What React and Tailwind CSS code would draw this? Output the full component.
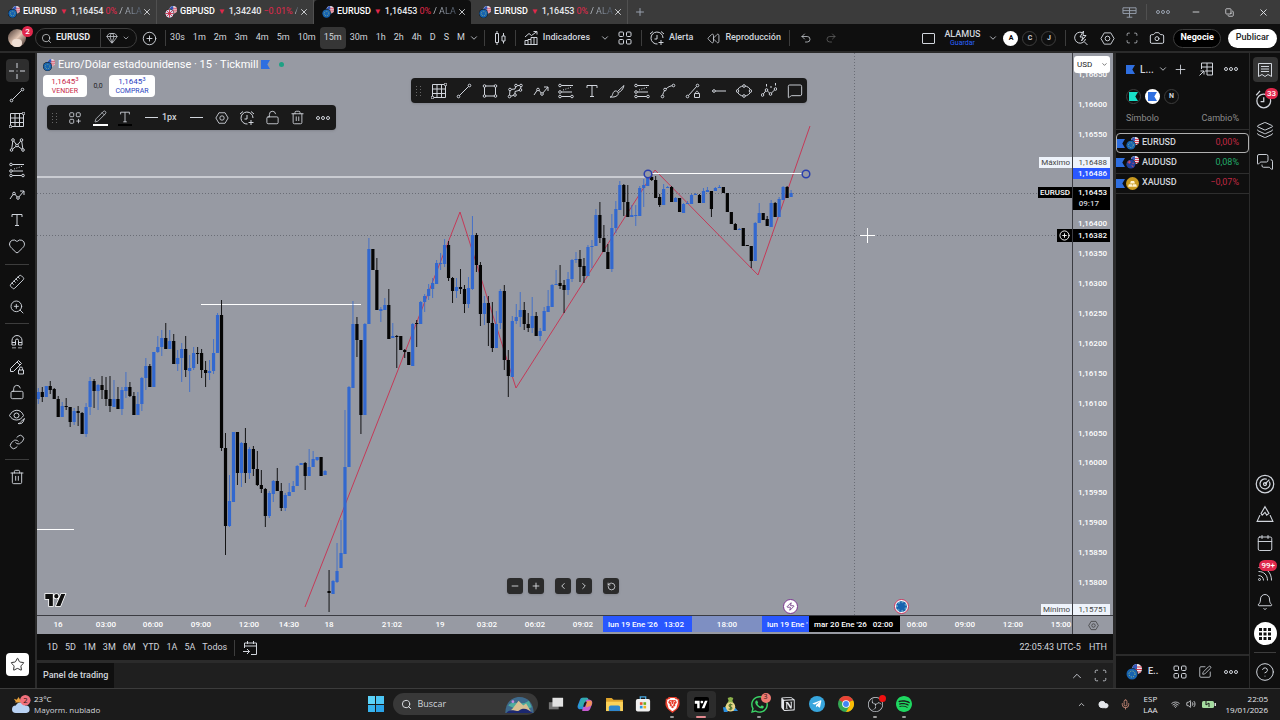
import React, { useState } from 'react';
import {
  Search, ChevronDown, ChevronUp, ChevronLeft, ChevronRight, Plus, Minus, X, Heart, Ruler, ZoomIn, LockOpen,
  Link, Trash2, Pencil, Undo2, Redo2, Rewind, Camera, Layers, Bell, Calendar, CircleHelp, MessageSquare,
  MessagesSquare, Star, RotateCcw, SquarePen, Mic, Wifi, Volume2, Cloud, Copy, CirclePlus, Gem, Zap,
} from 'lucide-react';
import { SiBrave, SiWhatsapp, SiNotion, SiSpotify, SiObsstudio } from 'react-icons/si';
import { FaTelegramPlane } from 'react-icons/fa';

const TABS = [
  { id: 1, symbol: 'EURUSD', price: '1,16454', change: '0%', rest: '/ ALA' },
  { id: 2, symbol: 'GBPUSD', price: '1,34240', change: '−0.01%', rest: '/' },
  { id: 3, symbol: 'EURUSD', price: '1,16453', change: '0%', rest: '/ ALA' },
  { id: 4, symbol: 'EURUSD', price: '1,16453', change: '0%', rest: '/ ALA' },
];

const INTERVALS = ['30s', '1m', '2m', '3m', '4m', '5m', '10m', '15m', '30m', '1h', '2h', '4h', 'D', 'S', 'M'];
const RANGES = ['1D', '5D', '1M', '3M', '6M', 'YTD', '1A', '5A', 'Todos'];

const PRICES = [
  '1,16650', '1,16600', '1,16550', '1,16500', '1,16450', '1,16400', '1,16350', '1,16300', '1,16250',
  '1,16200', '1,16150', '1,16100', '1,16050', '1,16000', '1,15950', '1,15900', '1,15850', '1,15800',
];

// x of every label on the time axis
const TICKS = [
  [21, '16'], [69, '03:00'], [116, '06:00'], [164, '09:00'], [212, '12:00'], [252, '14:30'], [292, '18'],
  [355, '21:02'], [403, '19'], [450, '03:02'], [498, '06:02'], [546, '09:02'], [690, '18:00'], [880, '06:00'],
  [928, '09:00'], [976, '12:00'], [1024, '15:00'],
];

const WATCHLIST = [
  { symbol: 'EURUSD', change: '0,00%', color: 'text-[#c02842]', coin: 'eu' },
  { symbol: 'AUDUSD', change: '0,08%', color: 'text-[#22ab6b]', coin: 'au' },
  { symbol: 'XAUUSD', change: '−0,07%', color: 'text-[#c02842]', coin: 'gold' },
];

const CHART_W = 1035;
const CHART_H = 562;

// [high, body top, body bottom, low, 1 = up]
const CANDLES = [
  [335, 339, 346, 351, 1], [334, 339, 344, 349, 0], [333, 333, 344, 344, 1], [328, 333, 337, 341, 0],
  [335, 336, 346, 346, 0], [343, 346, 364, 364, 0], [349, 353, 364, 364, 1], [345, 353, 354, 357, 0],
  [354, 354, 369, 374, 0], [355, 358, 369, 372, 1], [353, 358, 360, 373, 0], [359, 360, 381, 381, 0],
  [350, 354, 381, 384, 1], [324, 328, 354, 362, 1], [326, 328, 338, 355, 0], [331, 332, 338, 357, 1],
  [323, 332, 337, 346, 0], [324, 337, 346, 353, 0], [323, 346, 353, 359, 0], [327, 346, 354, 354, 1],
  [334, 346, 356, 356, 0], [334, 337, 356, 362, 1], [319, 334, 338, 345, 1], [329, 334, 343, 344, 0],
  [339, 343, 362, 362, 0], [339, 351, 362, 362, 1], [324, 325, 351, 358, 1], [305, 313, 325, 337, 1],
  [311, 313, 334, 334, 0], [299, 299, 334, 334, 1], [283, 294, 299, 300, 1], [277, 285, 294, 303, 1],
  [270, 285, 296, 296, 0], [277, 288, 296, 296, 1], [281, 288, 311, 311, 0], [297, 305, 311, 318, 1],
  [290, 296, 305, 329, 1], [283, 296, 317, 324, 0], [302, 315, 318, 339, 1], [294, 300, 315, 317, 1],
  [294, 300, 301, 311, 0], [296, 300, 317, 325, 0], [308, 317, 320, 334, 0], [307, 318, 320, 327, 1],
  [286, 300, 318, 321, 1], [260, 262, 300, 300, 1], [247, 262, 395, 398, 0], [380, 395, 473, 502, 0],
  [422, 448, 473, 474, 1], [379, 379, 449, 449, 1], [379, 379, 420, 432, 0], [389, 390, 420, 434, 1],
  [375, 390, 420, 430, 0], [394, 396, 420, 426, 1], [393, 396, 416, 423, 0], [398, 416, 432, 433, 0],
  [417, 432, 436, 440, 0], [435, 436, 463, 474, 0], [438, 440, 463, 465, 1], [427, 428, 441, 449, 1],
  [415, 428, 438, 438, 0], [430, 438, 455, 458, 0], [440, 442, 455, 458, 1], [430, 439, 443, 443, 1],
  [428, 433, 439, 439, 1], [412, 413, 433, 433, 1], [410, 410, 412, 412, 1], [409, 410, 423, 437, 0],
  [396, 414, 423, 423, 1], [398, 406, 414, 414, 1], [404, 404, 407, 408, 1], [404, 404, 423, 423, 0],
  [417, 418, 422, 422, 1], [517, 538, 540, 559, 0], [527, 528, 541, 541, 1], [490, 518, 529, 530, 1],
  [467, 500, 515, 515, 1], [357, 414, 501, 501, 1], [333, 334, 414, 414, 1], [248, 271, 335, 335, 1],
  [264, 271, 287, 304, 0], [287, 287, 362, 381, 0], [270, 271, 362, 362, 1], [185, 196, 271, 271, 1],
  [196, 196, 217, 217, 0], [205, 217, 257, 257, 0], [254, 256, 258, 269, 1], [245, 252, 257, 257, 1],
  [236, 252, 286, 286, 0], [270, 283, 285, 285, 1], [282, 283, 284, 315, 0], [283, 283, 297, 297, 0],
  [296, 297, 299, 305, 0], [299, 299, 312, 312, 0], [270, 271, 313, 313, 1], [267, 270, 271, 294, 0],
  [248, 249, 271, 271, 1], [241, 243, 249, 259, 1], [231, 236, 243, 247, 1], [225, 230, 236, 245, 1],
  [207, 210, 231, 231, 1], [200, 210, 211, 217, 1], [186, 192, 211, 214, 1], [188, 192, 225, 228, 0],
  [224, 225, 238, 250, 0], [225, 234, 238, 245, 1], [216, 234, 236, 241, 0], [232, 236, 251, 260, 0],
  [224, 235, 251, 255, 1], [163, 182, 236, 237, 1], [180, 182, 212, 219, 0], [209, 212, 261, 273, 0],
  [243, 250, 261, 272, 1], [243, 250, 270, 293, 0], [249, 270, 295, 299, 0], [258, 271, 295, 295, 1],
  [236, 238, 270, 276, 1], [232, 238, 307, 317, 0], [297, 307, 323, 344, 0], [263, 268, 324, 324, 1],
  [251, 264, 268, 271, 1], [239, 257, 264, 274, 1], [249, 257, 271, 277, 0], [260, 271, 275, 279, 0],
  [244, 263, 275, 280, 1], [259, 263, 283, 283, 0], [275, 278, 283, 288, 1], [254, 258, 278, 278, 1],
  [237, 253, 259, 259, 1], [231, 232, 254, 254, 1], [217, 231, 232, 232, 1], [212, 230, 233, 236, 0],
  [227, 232, 237, 260, 0], [219, 226, 237, 242, 1], [206, 207, 226, 229, 1], [199, 206, 207, 210, 1],
  [197, 206, 214, 229, 0], [205, 213, 223, 230, 0], [192, 194, 223, 223, 1], [187, 193, 194, 215, 1],
  [156, 162, 193, 193, 1], [149, 162, 185, 190, 0], [172, 185, 199, 199, 0], [191, 199, 216, 216, 0],
  [161, 175, 216, 219, 1], [148, 156, 175, 180, 1], [128, 132, 157, 157, 1], [131, 132, 149, 163, 0],
  [132, 149, 164, 164, 0], [152, 162, 164, 164, 1], [152, 162, 163, 173, 1], [133, 135, 163, 163, 1],
  [126, 132, 135, 154, 1], [122, 124, 133, 133, 1], [120, 124, 127, 128, 0], [123, 127, 145, 145, 0],
  [141, 144, 152, 154, 0], [131, 136, 152, 152, 1], [133, 134, 135, 135, 1], [133, 134, 149, 149, 0],
  [144, 145, 149, 149, 1], [145, 145, 159, 159, 0], [150, 151, 160, 160, 1], [148, 150, 151, 151, 1],
  [141, 142, 151, 151, 1], [140, 141, 142, 142, 1], [141, 142, 150, 150, 0], [135, 138, 150, 150, 1],
  [134, 137, 139, 139, 1], [138, 138, 156, 164, 0], [134, 135, 138, 138, 1], [132, 134, 135, 135, 1],
  [134, 134, 140, 140, 0], [140, 140, 159, 159, 0], [159, 159, 171, 171, 0], [170, 171, 177, 177, 0],
  [175, 176, 177, 177, 1], [175, 175, 193, 193, 0], [192, 192, 193, 193, 0], [193, 193, 208, 215, 0],
  [169, 170, 208, 208, 1], [150, 160, 170, 170, 1], [160, 160, 167, 167, 0], [163, 166, 173, 173, 0],
  [147, 150, 174, 174, 1], [149, 150, 164, 164, 0], [144, 146, 164, 164, 1], [133, 134, 147, 147, 1],
  [133, 134, 145, 145, 0], [137, 140, 144, 144, 1],
];

// Line icons, drawn on a 16px grid
function Icon({ children, className = 'size-4' }) {
  return (
    <svg viewBox="0 0 16 16" className={`shrink-0 ${className}`} fill="none" stroke="currentColor" strokeWidth="1" aria-hidden="true">
      {children}
    </svg>
  );
}

const Node = ({ x, y }) => <circle cx={x} cy={y} r="1.3" fill="#0f0f0f" />;

const CrossIcon = () => <Icon><path d="M8 0v5M8 11v5M0 8h5M11 8h5M7.5 8h1" /></Icon>;
const TrendIcon = () => (
  <Icon><path d="M3 13 13 3" /><Node x={13.5} y={2.5} /><Node x={2.5} y={13.5} /></Icon>
);
const GannIcon = () => (
  <Icon>
    <path d="M1.5 1.5h13v13h-13zM1.5 6h13M1.5 10.5h13M6 1.5v13M10.5 1.5v13" />
    <Node x={14.5} y={1.5} /><Node x={1.5} y={14.5} />
  </Icon>
);
const PatternIcon = () => (
  <Icon>
    <path d="M2.5 13 4 3l4 5.5L12.5 3 14 13 8 8.5z" />
    <Node x={2.5} y={13} /><Node x={4} y={3} /><Node x={8} y={8.5} /><Node x={12.5} y={3} /><Node x={14} y={13} />
  </Icon>
);
const FibIcon = () => (
  <Icon>
    <path d="M3 2.5h12M2 9h12M3 13.5h11" /><path d="m5 7 9-3" strokeDasharray="1 1.5" />
    <Node x={2} y={2.5} /><Node x={2} y={9} /><Node x={2} y={13.5} /><Node x={14} y={13.5} />
  </Icon>
);
const PathIcon = () => (
  <Icon>
    <path d="M1 12 5 6l4 5 6-7M11 4h4v4" /><Node x={5} y={6.5} /><Node x={9} y={11} />
  </Icon>
);
const TextIcon = ({ className }) => <Icon className={className}><path d="M3 5V2.5h10V5M8 2.5v11M6 13.5h4" /></Icon>;
const MagnetIcon = () => (
  <Icon>
    <path d="M3 11V6.5a5 5 0 0 1 10 0V11H9.5V6.5a1.5 1.5 0 0 0-3 0V11zM3 8.5h3.5M9.5 8.5H13M4 13v1.5M6 13v1.5M10 13v1.5M12 13v1.5" />
  </Icon>
);
const PencilLockIcon = () => (
  <Icon>
    <path d="m1.5 9.5 8-8 3 3-8 8h-3zM8 3l3 3" /><path d="M9.5 11h5v4h-5zM10.5 11V9.5a1.5 1.5 0 0 1 3 0V11" />
  </Icon>
);
const EyeBrushIcon = () => (
  <Icon>
    <path d="M.5 6.5C4-.5 12-.5 14.5 6.5 13 9 11 11 7.5 11S2 9 .5 6.5z" /><circle cx="7.5" cy="6.5" r="2.5" />
    <path d="M9 14.5c2 .5 2.5-2 3.5-2.5l3-2.5-1.5 3.5c-1 1.5-3 2-5 1.5z" fill="#0f0f0f" />
  </Icon>
);
const RectIcon = () => (
  <Icon>
    <path d="M2.5 3h11v10h-11z" /><Node x={2.5} y={3} /><Node x={13.5} y={3} /><Node x={2.5} y={13} /><Node x={13.5} y={13} />
  </Icon>
);
const PolyIcon = () => (
  <Icon>
    <path d="M2.5 13.5 3 6.500l5-.5 1-3.500h5L13.500 7 8 8.500V12z" />
    <Node x={2.5} y={13.5} /><Node x={3} y={6.5} /><Node x={9} y={2.5} /><Node x={14} y={2.5} /><Node x={13.5} y={7} /><Node x={8} y={12} />
  </Icon>
);
const BrushIcon = () => (
  <Icon><path d="M1 14c3 .5 2-5 5-6 2-.5 4 1.5 3 3.5-1 2-4 3-8 2.5zM8.500 8.500 15 2.500c-1 4-3 6-5.500 7" /></Icon>
);
const CurveIcon = () => (
  <Icon>
    <path d="M2.5 13.5C3 8 7 3 13.5 2.5" /><Node x={2.5} y={13.5} /><Node x={5} y={6.5} /><Node x={13.5} y={2.5} />
  </Icon>
);
const TrendLockIcon = () => (
  <Icon>
    <path d="M3 13 12 3M9.5 10.5h5v4h-5zM10.5 10.5c0-3 3-3 3 0" /><Node x={12.5} y={2.5} /><Node x={2.5} y={13.5} />
  </Icon>
);
const HLineIcon = () => <Icon><path d="M1 8h14" /><Node x={3} y={8} /></Icon>;
const EllipseIcon = () => (
  <Icon>
    <ellipse cx="8" cy="8" rx="6.5" ry="5" /><Node x={1.5} y={8} /><Node x={14.5} y={8} /><Node x={8} y={3} /><Node x={8} y={13} />
  </Icon>
);
const WaveIcon = () => (
  <Icon>
    <path d="m1.5 12 4-5 4 4 5-5M5.5 1v2.5M10 3v2M14.5 0v2.5" />
    <Node x={1.5} y={12} /><Node x={5.5} y={7} /><Node x={9.5} y={11} /><Node x={14.5} y={6} />
  </Icon>
);
const DotsIcon = () => (
  <Icon><circle cx="3" cy="8" r="1.5" /><circle cx="8" cy="8" r="1.5" /><circle cx="13" cy="8" r="1.5" /></Icon>
);
const BlocksIcon = () => (
  <Icon>
    <rect x="2" y="2" width="4.5" height="4.5" rx="1" /><rect x="9.5" y="2" width="4.5" height="4.5" rx="1" />
    <rect x="2" y="9.5" width="4.5" height="4.5" rx="1" /><rect x="9.5" y="9.5" width="4.5" height="4.5" rx="1" />
  </Icon>
);
const BlocksPlusIcon = () => (
  <Icon className="size-[14px]">
    <rect x="2" y="2" width="4.5" height="4.5" rx="1" /><rect x="9.5" y="2" width="4.5" height="4.5" rx="1" />
    <rect x="2" y="9.5" width="4.5" height="4.5" rx="1" /><path d="M12 9v5M9.5 11.5h5" />
  </Icon>
);
const AlarmPlusIcon = () => (
  <Icon>
    <path d="M14 8A6 6 0 1 0 8.5 14M1 4l3-2.5M15 4l-3-2.5M8 5v4H5.5M12 10v5M9.5 12.5h5" />
  </Icon>
);
const AlarmIcon = () => (
  <Icon className="size-5"><circle cx="7" cy="9.5" r="5.5" /><path d="M1 5l3-3.5M7 6.5V10H4.5" /></Icon>
);
const CandlesIcon = () => (
  <Icon><path d="M3.5 3.5h3v9h-3zM5 1v2.5M5 12.5V15M10 6h3v5h-3zM11.5 3v3M11.5 11v2.5" /></Icon>
);
const IndicatorsIcon = () => (
  <Icon><path d="M2 14.5v-4h3v4M5 10.5v-1h3v5M8 9.5v-2h3v7M11 7.5h3v7M1.5 14.5h13M2 7l4-3.5 2.5 2L14 1.5M10.5 1.5H14v3" /></Icon>
);
const HexIcon = ({ className }) => (
  <Icon className={className}><path d="M4.5 2h7L15 8l-3.5 6h-7L1 8z" /><circle cx="8" cy="8" r="2.5" /></Icon>
);
const QuickSearchIcon = () => (
  <Icon><path d="M9 2.5A5.5 5.5 0 1 0 12.5 9M11 11.5l3.5 3.5M10.5 1 7 7h3l-1.500 4L13 5.500h-3z" /></Icon>
);
const FrameIcon = ({ className }) => (
  <Icon className={className}><path d="M1.5 5V3q0-1.5 1.5-1.5h2M11 1.5h2q1.5 0 1.5 1.5v2M14.5 11v2q0 1.5-1.5 1.5h-2M5 14.5H3Q1.5 14.5 1.5 13v-2" /></Icon>
);
const TableIcon = () => (
  <Icon><path d="M3.5 8V2h11v12H9M3.5 6h11M9 2v12M14 10H7M1.5 14.5 6 10M2.5 10H6v3.5" /></Icon>
);
const ListIcon = () => (
  <Icon><path d="M1.5 1.5h13v13l-3.5-2-3 2-3-2-3.5 2zM4 4.5h8M4 7h8M4 9.5h8" /></Icon>
);
const TargetIcon = () => (
  <Icon className="size-5"><circle cx="8" cy="8" r="7" /><path d="M11.5 6A4 4 0 1 1 9.5 4.200M8 8l3.500-3.500" /><circle cx="8" cy="8" r="1.200" /></Icon>
);
const PyramidIcon = () => (
  <Icon className="size-[18px]"><path d="m8 1.5 3.5 6L9.5 9 8 6.5 5.5 9l-1-1.5zM3.5 9 1 14.5h14L12.5 9" /></Icon>
);
const FeedIcon = () => (
  <Icon><circle cx="2.5" cy="13.5" r="1" /><path d="M1.5 9.5c3 0 5 2 5 5M1.5 5.5c5.5 0 9 3.5 9 9M1.5 1.5c8 0 13 5 13 13" /></Icon>
);
const GoToDateIcon = () => (
  <Icon><path d="M2.5 8V3h12v11.5H9M2.5 6h12M5.5 1v3M11.5 1v3M1 11.5h6.5M5 9l2.5 2.5L5 14" /></Icon>
);
const MonitorsIcon = () => (
  <Icon className="size-[15px]"><path d="M1 3h14v6H1zM8 3v10M1 6h14M5 13h6" /></Icon>
);

function Flag({ className = 'text-[#2f6fe0]' }) {
  return (
    <svg viewBox="0 0 10 10" className={`size-[9px] shrink-0 ${className}`} fill="currentColor" aria-hidden="true">
      <path d="M0 0h10L7 5l3 5H0z" />
    </svg>
  );
}

function Coins({ kind = 'eu', className = 'size-[13px]' }) {
  if (kind === 'gold') {
    return (
      <svg viewBox="0 0 16 16" className={`shrink-0 ${className}`} aria-hidden="true">
        <circle cx="8" cy="8" r="8" fill="#c99a20" />
        <path d="M6 5h4l1 3H5zM3.5 9h4l.5 3H2.5zM8.5 9h4l1 3H8z" fill="#fff3d0" />
      </svg>
    );
  }
  return (
    <svg viewBox="0 0 16 16" className={`shrink-0 ${className}`} aria-hidden="true">
      <circle cx="11" cy="5" r="5" fill="#f1e9ee" />
      <path d="M10 3h6M10 5.5h6M9 8h6" stroke="#d43a50" strokeWidth="1.2" />
      <path d="M6.5 3A5 5 0 0 1 11 0v5H6z" fill="#3558b8" />
      <circle cx="6" cy="10" r="6" fill="#0f0f0f" />
      <circle cx="6" cy="10" r="5.5" fill={kind === 'gb' ? '#d8dcec' : kind === 'au' ? '#22409c' : '#1763b0'} />
      {kind === 'eu' && <circle cx="6" cy="10" r="3" fill="none" stroke="#a9c47c" strokeWidth="1" strokeDasharray="1 1.4" />}
      {kind === 'au' && <path d="M2 7.5h4M4 5.5v4M7 12l2 1M8 9h1.5" stroke="#e84a58" strokeWidth="1.2" />}
      {kind === 'gb' && <path d="M6 4.5v11M.5 10h11M2 6l8 8M10 6l-8 8" stroke="#cc2c48" strokeWidth="1.2" />}
    </svg>
  );
}

function TvLogo({ className, fill, stroke = 'none' }) {
  return (
    <svg viewBox="-2 -2 40 26" className={className} aria-hidden="true">
      <path d="M0 0h14v22H7V9H0zM28 22h-8L29.5 0H37zM20.5 8a4 4 0 1 1 0-8 4 4 0 0 1 0 8z" fill={fill} stroke={stroke} strokeWidth="3" paintOrder="stroke" />
    </svg>
  );
}

const Sep = () => <span className="h-4 w-px shrink-0 bg-[#3d3d3d]" />;

function WindowTabs({ active, onSelect }) {
  return (
    <header className="flex h-6 shrink-0 items-stretch bg-[#3b3b3b] text-[9px] text-gray-200">
      {TABS.map((tab) => (
        <div
          key={tab.id}
          className={`flex w-[157px] shrink-0 items-center gap-[2px] pl-2 pr-1 ${active === tab.id ? 'rounded-t bg-[#0f0f0f]' : 'border-r border-[#505050]'}`}
        >
          <button onClick={() => onSelect(tab.id)} className="flex min-w-0 flex-1 items-center gap-[2px] whitespace-nowrap">
            <Coins kind={tab.symbol === 'GBPUSD' ? 'gb' : 'eu'} className="mr-px size-3" />
            <span className="font-medium text-white">{tab.symbol}</span>
            <span className="px-px text-[8px] text-[#e0284c]">▼</span>
            <span className="font-medium">{tab.price}</span>
            <span className="text-[#e0284c]">{tab.change}</span>
            <span className="bg-linear-to-r from-gray-300 to-gray-600 bg-clip-text text-transparent">{tab.rest}</span>
          </button>
          <button aria-label="Cerrar pestaña"><X className="size-[10px]" strokeWidth={2} /></button>
        </div>
      ))}
      <button aria-label="Nueva pestaña" className="px-[6px] text-gray-400"><Plus className="size-3" strokeWidth={2} /></button>
      <div className="ml-auto flex items-center text-gray-400">
        <MonitorsIcon />
        <span className="ml-[9px] mr-2 h-4 w-px bg-[#505050]" />
        <DotsIcon />
        <button aria-label="Minimizar" className="ml-5 text-gray-200"><Minus className="size-[10px]" /></button>
        <button aria-label="Restaurar" className="ml-6 text-gray-200"><Copy className="size-[9px] -scale-x-100 rotate-90" /></button>
        <button aria-label="Cerrar" className="ml-6 mr-[11px] text-gray-200"><X className="size-[11px]" /></button>
      </div>
    </header>
  );
}

function TopBar({ interval, onInterval }) {
  return (
    <div className="flex h-[29px] shrink-0 items-center border-b-2 border-[#2b2b2b] bg-[#0f0f0f] pl-2 pr-[3px] pt-px text-[9px] font-medium text-gray-300">
      <button aria-label="Perfil" className="relative size-[18px] shrink-0 rounded-full bg-linear-to-br from-[#4a3a34] via-[#e3c6b4] to-[#3a2c28]">
        <span className="absolute bottom-0 left-1 h-2 w-[10px] rounded-full bg-[#f0dfd4]" />
        <span className="absolute -right-[7px] -top-[3px] flex size-[11px] items-center justify-center rounded-full bg-[#e0284c] text-[8px] text-white">2</span>
      </button>
      <div className="ml-[9px] flex h-5 items-center rounded-full border border-[#3d3d3d]">
        <button className="flex items-center gap-1 pl-[5px] pr-[10px] font-bold text-gray-200">
          <Search className="size-[11px]" strokeWidth={1.5} />EURUSD
        </button>
        <span className="h-[18px] w-px bg-[#3d3d3d]" />
        <button aria-label="Clase" className="flex items-center gap-1 pl-[5px] pr-[6px]">
          <Gem className="size-3" strokeWidth={1.5} /><ChevronDown className="size-2" />
        </button>
      </div>
      <button aria-label="Añadir símbolo" className="ml-[5px] mr-2"><CirclePlus className="size-[15px]" strokeWidth={1.5} /></button>
      <Sep />
      <div className="flex items-center font-normal">
        {INTERVALS.map((item) => (
          <button
            key={item}
            onClick={() => onInterval(item)}
            className={`h-[22px] rounded px-1 ${item === interval ? 'bg-[#363636]' : ''}`}
          >
            {item}
          </button>
        ))}
        <button aria-label="Más intervalos" className="mr-[5px]"><ChevronDown className="size-[10px]" /></button>
      </div>
      <Sep />
      <button aria-label="Velas" className="mx-[7px]"><CandlesIcon /></button>
      <Sep />
      <button className="ml-[7px] flex items-center gap-1"><IndicatorsIcon />Indicadores</button>
      <button aria-label="Favoritos" className="ml-[10px] mr-[7px]"><ChevronDown className="size-[10px]" /></button>
      <button aria-label="Plantillas" className="mr-2"><BlocksIcon /></button>
      <Sep />
      <button className="ml-[7px] mr-[14px] flex items-center gap-1"><AlarmPlusIcon />Alerta</button>
      <button className="mr-2 flex items-center gap-[5px]"><Rewind className="size-[13px]" strokeWidth={1.5} />Reproducción</button>
      <Sep />
      <button aria-label="Deshacer" className="ml-[10px]"><Undo2 className="size-3" strokeWidth={1.5} /></button>
      <button aria-label="Rehacer" className="ml-[13px] text-[#666]"><Redo2 className="size-3" strokeWidth={1.5} /></button>

      <div className="ml-auto flex items-center">
        <span className="h-[11px] w-[13px] rounded-[1px] border border-gray-300" />
        <button className="ml-[9px] flex flex-col items-center text-[9px] leading-[9px]">
          <span>ALAMUS</span>
          <span className="text-[7px] font-normal leading-[8px] text-[#2962ff]">Guardar</span>
        </button>
        <ChevronDown className="ml-2 mr-[5px] size-[10px]" />
        <div className="flex gap-1 text-[7px] font-bold">
          <button className="size-[15px] rounded-full bg-white text-black">A</button>
          <button className="size-[15px] rounded-full border border-[#3d3d3d]">C</button>
          <button className="size-[15px] rounded-full border border-[#3d3d3d]">J</button>
        </div>
        <span className="ml-[9px] mr-[7px] h-4 w-px bg-[#3d3d3d]" />
        <div className="flex items-center gap-[11px]">
          <button aria-label="Búsqueda rápida"><QuickSearchIcon /></button>
          <button aria-label="Ajustes"><HexIcon className="size-[15px]" /></button>
          <button aria-label="Pantalla completa"><FrameIcon className="size-3" /></button>
          <button aria-label="Captura"><Camera className="size-4" strokeWidth={1.5} /></button>
        </div>
        <button className="ml-2 h-[19px] rounded-full border border-[#3d3d3d] bg-black px-[6px] text-[9px] font-bold text-white">Negocie</button>
        <button className="ml-[7px] h-[19px] rounded-full bg-white px-2 text-[9px] font-medium text-[#222]">Publicar</button>
      </div>
    </div>
  );
}

function DrawingRail() {
  return (
    <aside className="flex w-[35px] shrink-0 flex-col items-center bg-[#0f0f0f] pb-3 pr-px pt-[6px] text-gray-300">
      <button aria-label="Cruz" className="mb-[5px] flex size-[23px] items-center justify-center rounded bg-[#2e2e2e]"><CrossIcon /></button>
      <div className="flex flex-col items-center gap-[9px]">
        <button aria-label="Línea de tendencia"><TrendIcon /></button>
        <button aria-label="Gann"><GannIcon /></button>
        <button aria-label="Patrones"><PatternIcon /></button>
        <button aria-label="Pronóstico"><FibIcon /></button>
        <button aria-label="Trayectoria"><PathIcon /></button>
        <button aria-label="Texto"><TextIcon /></button>
        <button aria-label="Favorito"><Heart className="size-[18px]" strokeWidth={1.3} /></button>
      </div>
      <span className="my-[9px] h-px w-6 bg-[#3d3d3d]" />
      <div className="flex flex-col items-center gap-[9px]">
        <button aria-label="Medir"><Ruler className="size-4 -scale-x-100" strokeWidth={1.4} /></button>
        <button aria-label="Acercar"><ZoomIn className="size-4" strokeWidth={1.4} /></button>
      </div>
      <span className="mb-[10px] mt-2 h-px w-6 bg-[#3d3d3d]" />
      <div className="flex flex-col items-center gap-[9px]">
        <button aria-label="Imán"><MagnetIcon /></button>
        <button aria-label="Bloquear dibujo"><PencilLockIcon /></button>
        <button aria-label="Bloquear todo"><LockOpen className="size-4" strokeWidth={1.4} /></button>
        <button aria-label="Ocultar"><EyeBrushIcon /></button>
        <button aria-label="Vincular"><Link className="size-4" strokeWidth={1.4} /></button>
      </div>
      <span className="my-[9px] h-px w-6 bg-[#3d3d3d]" />
      <button aria-label="Eliminar"><Trash2 className="size-4" strokeWidth={1.4} /></button>
      <button aria-label="Herramientas favoritas" className="mt-auto flex size-[23px] items-center justify-center rounded bg-white text-[#222]">
        <Star className="size-[15px]" strokeWidth={1.5} />
      </button>
    </aside>
  );
}

function Grip() {
  return (
    <svg viewBox="0 0 6 12" className="h-3 w-[6px] shrink-0 fill-[#666]" aria-hidden="true">
      <path d="M0 1h1v1H0zM4 1h1v1H4zM0 4h1v1H0zM4 4h1v1H4zM0 7h1v1H0zM4 7h1v1H4zM0 10h1v1H0zM4 10h1v1H4z" />
    </svg>
  );
}

function Candles() {
  return (
    <svg
      viewBox={`0 0 ${CHART_W} ${CHART_H}`}
      preserveAspectRatio="none"
      className="absolute inset-0 size-full"
      role="img"
      aria-label="Gráfico EURUSD 15 minutos"
    >
      <g stroke="#6a6d76" strokeDasharray="1 2" shapeRendering="crispEdges">
        <path d="M0 140.5H1035M0 182.5H1035M817.5 0V562" />
      </g>
      <path d="M0 124H611" stroke="#c9cbd1" strokeWidth="2" />
      <path d="M164 251.5H324M0 476.5H37" stroke="#fff" strokeWidth="1" />
      <path d="M268 554 423 159 479 335 618 117 721 222 773 73" fill="none" stroke="#c43a58" strokeWidth="1" />
      {CANDLES.map(([high, top, bottom, low, up], i) => {
        const x = 1.3 + i * 3.983;
        const fill = up ? '#3268cf' : '#050505';
        return (
          <g key={i} fill={fill}>
            <rect x={x - 0.5} y={high} width="1" height={Math.max(low - high, 1)} opacity={up ? 0.8 : 0.9} />
            <rect x={x - 1.6} y={top} width="3.2" height={Math.max(bottom - top, 1)} />
          </g>
        );
      })}
      <path d="M611 120.5H769" stroke="#fff" strokeWidth="1" />
      <g fill="#979aa3" stroke="#2a3fae" strokeWidth="1.5">
        <circle cx="611" cy="121" r="3.8" /><circle cx="769" cy="121" r="3.8" />
      </g>
      <path d="M830.5 175v15M823 182.5h15" stroke="#fff" strokeWidth="1" />
    </svg>
  );
}

function TradeBox() {
  return (
    <div className="absolute left-[6px] top-[5px] flex flex-col items-start">
      <div className="flex h-[13px] items-center gap-[3px] text-white">
        <Coins className="size-3" />
        <h1 className="text-[11px] font-normal leading-[13px]">Euro/Dólar estadounidense · 15 · Tickmill</h1>
        <Flag className="text-[#2f6fe0]" />
        <span className="ml-[6px] size-[5px] rounded-full bg-[#1fa184]" />
      </div>
      <div className="mt-1 flex items-center text-center text-[8px] font-normal leading-[9px]">
        <button className="flex h-[22px] w-11 flex-col items-center justify-center rounded bg-white text-[#c8294a]">
          <span className="leading-[10px]">1,1645<sup className="text-[6px]">3</sup></span><span className="text-[7px]">VENDER</span>
        </button>
        <span className="w-[22px] text-[7px] text-[#222]">0,0</span>
        <button className="flex h-[22px] w-[46px] flex-col items-center justify-center rounded bg-white text-[#2a3fc0]">
          <span className="leading-[10px]">1,1645<sup className="text-[6px]">3</sup></span><span className="text-[7px]">COMPRAR</span>
        </button>
      </div>
      <div className="ml-1 mt-2 flex h-[25px] items-center rounded bg-[#1a1a1a] px-[5px] text-[9px] text-gray-300 shadow">
        <Grip />
        <button aria-label="Plantillas" className="ml-[10px] mr-[10px]"><BlocksPlusIcon /></button>
        <button aria-label="Color de línea" className="flex w-4 flex-col items-center gap-px">
          <Pencil className="size-[13px]" strokeWidth={1.4} /><span className="h-[2px] w-[15px] bg-white" />
        </button>
        <button aria-label="Color de texto" className="ml-[10px] flex w-[14px] flex-col items-center">
          <TextIcon className="size-[14px]" /><span className="h-[2px] w-[14px] bg-black" />
        </button>
        <button className="ml-[13px] flex items-center gap-1"><span className="h-px w-[13px] bg-gray-300" />1px</button>
        <button aria-label="Estilo de línea" className="ml-[13px] mr-3"><span className="block h-px w-[13px] bg-gray-300" /></button>
        <div className="flex items-center gap-[10px]">
          <button aria-label="Ajustes"><HexIcon className="size-[14px]" /></button>
          <button aria-label="Alerta"><AlarmPlusIcon /></button>
          <button aria-label="Bloquear"><LockOpen className="size-[15px]" strokeWidth={1.4} /></button>
          <button aria-label="Eliminar"><Trash2 className="size-[15px]" strokeWidth={1.4} /></button>
          <button aria-label="Más"><DotsIcon /></button>
        </div>
      </div>
    </div>
  );
}

function FavoritesBar() {
  const tools = [
    GannIcon, TrendIcon, RectIcon, PolyIcon, PathIcon, FibIcon, TextIcon, BrushIcon, FibIcon, CurveIcon,
    TrendLockIcon, HLineIcon, EllipseIcon, WaveIcon,
  ];
  return (
    <div className="absolute left-[374px] top-[25px] flex h-[25px] w-[396px] items-center rounded bg-[#1a1a1a] pl-[5px] pr-1 text-gray-300 shadow">
      <Grip />
      <div className="ml-[9px] flex flex-1 items-center justify-between">
        {tools.map((Tool, i) => (
          <button key={i} aria-label={`Herramienta ${i + 1}`}><Tool /></button>
        ))}
        <button aria-label="Comentario"><MessageSquare className="size-4" strokeWidth={1.4} /></button>
      </div>
    </div>
  );
}

function ChartControls() {
  const btn = 'flex size-4 items-center justify-center rounded-[3px] bg-[#2b2b2b] text-gray-200 shadow';
  return (
    <div className="absolute bottom-[21px] left-[470px] flex">
      <button aria-label="Alejar" className={btn}><Minus className="size-[10px]" /></button>
      <button aria-label="Acercar" className={`ml-[5px] ${btn}`}><Plus className="size-[10px]" /></button>
      <button aria-label="Izquierda" className={`ml-[11px] ${btn}`}><ChevronLeft className="size-[10px]" /></button>
      <button aria-label="Derecha" className={`ml-[5px] ${btn}`}><ChevronRight className="size-[10px]" /></button>
      <button aria-label="Restablecer" className={`ml-[11px] ${btn}`}><RotateCcw className="size-[9px]" /></button>
    </div>
  );
}

function PriceBadge({ y, tag, tagClass, value, className }) {
  return (
    <div className="absolute right-[3px] flex items-start gap-px" style={{ top: `${(y / CHART_H) * 100}%` }}>
      {tag && <span className={`flex h-[11px] items-center px-[2px] ${tagClass}`}>{tag}</span>}
      <span className={`w-[37px] pr-[3px] text-right leading-[11px] ${className}`}>{value}</span>
    </div>
  );
}

function PriceAxis() {
  return (
    <div className="flex w-[41px] shrink-0 flex-col border-l border-[#3b3c42] bg-[#979aa3] pb-[27px] pt-4">
      <div className="flex flex-1 flex-col justify-between pr-[6px] text-right leading-[11px]">
        {PRICES.map((price) => <span key={price}>{price}</span>)}
      </div>
    </div>
  );
}

function Chart() {
  return (
    <div className="relative flex min-h-0 flex-1 overflow-hidden bg-[#979aa3] text-[8px] font-medium text-white">
      <div className="relative min-w-0 flex-1">
        <Candles />
        <TradeBox />
        <FavoritesBar />
        <ChartControls />
        <TvLogo className="absolute bottom-2 left-[6px] h-[14px] w-6" fill="#0f0f0f" stroke="#fff" />
        <span className="absolute bottom-px left-[746px] flex size-[15px] items-center justify-center rounded-full border border-[#7b3390] bg-white text-[#5a1a70]">
          <Zap className="size-[9px]" />
        </span>
        <span className="absolute bottom-px left-[857px] flex size-[15px] items-center justify-center rounded-full border border-[#c8325c] bg-white">
          <span className="size-[11px] rounded-full border-2 border-dotted border-[#5a9ac0] bg-[#1763b0]" />
        </span>
      </div>
      <PriceAxis />
      <select aria-label="Divisa" className="absolute right-[3px] top-[3px] h-[17px] w-[36px] appearance-none rounded-[3px] bg-white pl-[3px] text-[8px] font-normal text-[#222]">
        <option>USD</option>
      </select>
      <ChevronDown className="pointer-events-none absolute right-[5px] top-2 size-[7px] text-[#222]" />
      <PriceBadge y={104} tag="Máximo" tagClass="bg-[#eef3fb] font-normal text-[#444]" value="1,16488" className="bg-[#eef3fb] font-normal text-[#444]" />
      <PriceBadge y={115} value="1,16486" className="bg-[#2957ff]" />
      <PriceBadge y={134} tag="EURUSD" tagClass="bg-black" value={<>1,16453<br /><span className="pr-2 text-gray-300">09:17</span></>} className="bg-black pb-px leading-[10px]" />
      <PriceBadge y={176} tag={<CirclePlus className="size-[11px]" />} tagClass="h-[13px] bg-black px-[1px]" value="1,16382" className="bg-black py-px" />
      <PriceBadge y={551} tag="Mínimo" tagClass="bg-[#eef3fb] font-normal text-[#444]" value="1,15751" className="bg-[#eef3fb] font-normal text-[#444]" />
    </div>
  );
}

function TimeBadge({ from, to, className, children }) {
  return (
    <div
      className={`absolute top-0 h-4 whitespace-pre pl-[5px] leading-[18px] ${className}`}
      style={{ left: `${(from / CHART_W) * 100}%`, width: `${((to - from) / CHART_W) * 100}%` }}
    >
      {children}
    </div>
  );
}

function TimeAxis() {
  return (
    <div className="flex h-[19px] shrink-0 border-t border-[#3b3c42] bg-[#979aa3] text-[8px] font-medium text-white">
      <div className="relative flex min-w-0 flex-1 items-center overflow-hidden">
        <TimeBadge from={655} to={725} className="bg-[#7e8fc2]" />
        {TICKS.map(([x, label], i) => (
          <React.Fragment key={x}>
            <span style={{ flexGrow: x - (i ? TICKS[i - 1][0] : 0) }} />
            <span className="relative flex w-0 justify-center">{label}</span>
          </React.Fragment>
        ))}
        <span style={{ flexGrow: CHART_W - 1024 }} />
        <TimeBadge from={566} to={655} className="bg-[#2957ff]">{"lun 19 Ene '26   13:02"}</TimeBadge>
        <TimeBadge from={725} to={772} className="bg-[#2957ff]">{"lun 19 Ene '"}</TimeBadge>
        <TimeBadge from={772} to={863} className="bg-black">{"mar 20 Ene '26   02:00"}</TimeBadge>
      </div>
      <button aria-label="Ajustes de escala" className="flex w-[41px] items-center justify-center border-l border-[#3b3c42] text-[#333]">
        <HexIcon className="size-[11px]" />
      </button>
    </div>
  );
}

function BottomBars() {
  return (
    <>
      <div className="flex h-[26px] shrink-0 items-center bg-[#0f0f0f] px-[6px] pt-[2px] text-[9px] font-normal text-gray-300">
        <div className="flex gap-px pl-px">
          {RANGES.map((range) => <button key={range} className="px-[3px]">{range}</button>)}
        </div>
        <span className="ml-1 mr-[7px] h-4 w-px bg-[#3d3d3d]" />
        <button aria-label="Ir a fecha"><GoToDateIcon /></button>
        <span className="ml-auto">22:05:43 UTC-5</span>
        <button className="ml-2">HTH</button>
      </div>
      <div className="flex h-7 shrink-0 items-stretch border-t-3 border-[#2b2b2b] bg-[#1f1f1f] text-gray-300">
        <button className="bg-[#0f0f0f] px-[6px] pt-px text-[9px] font-medium">Panel de trading</button>
        <div className="ml-auto flex items-center gap-[10px] pr-[6px]">
          <button aria-label="Expandir"><ChevronUp className="size-[14px]" strokeWidth={1.5} /></button>
          <button aria-label="Maximizar"><FrameIcon className="size-[13px]" /></button>
        </div>
      </div>
    </>
  );
}

function Watchlist() {
  return (
    <section className="flex w-[133px] shrink-0 flex-col bg-[#0f0f0f] text-gray-300">
      <div className="flex h-8 items-center pl-[10px] pr-[10px]">
        <Flag />
        <button className="ml-[5px] flex items-center gap-1 text-[10px] font-medium">L...<ChevronDown className="size-[10px]" /></button>
        <button aria-label="Añadir" className="ml-auto"><Plus className="size-[15px]" strokeWidth={1.4} /></button>
        <button aria-label="Tabla" className="ml-[10px]"><TableIcon /></button>
        <button aria-label="Más" className="ml-[9px]"><DotsIcon /></button>
      </div>
      <div className="flex h-[23px] items-center gap-1 pl-[10px]">
        <button aria-label="Lista turquesa" className="flex size-[15px] items-center justify-center rounded-full border border-[#3d3d3d]"><Flag className="text-[#18dfc8]" /></button>
        <button aria-label="Lista azul" className="flex size-[15px] items-center justify-center rounded-full bg-white"><Flag /></button>
        <button className="size-[15px] rounded-full border border-[#3d3d3d] text-[7px] font-bold">N</button>
      </div>
      <table className="w-full border-collapse text-[9px]">
        <thead>
          <tr className="h-[21px] border-b border-[#2e2e2e] text-left text-[#8c8c8c]">
            <th className="pl-[10px] font-normal">Símbolo</th>
            <th className="pr-[10px] text-right font-normal">Cambio%</th>
          </tr>
        </thead>
        <tbody>
          <tr className="h-1"><td colSpan={2} /></tr>
          {WATCHLIST.map((row, i) => (
            <tr key={row.symbol} className={`h-5 ${i === 0 ? 'rounded outline outline-1 -outline-offset-1 outline-[#b0b0b0]' : 'border-b border-[#2e2e2e]'}`}>
              <td>
                <span className="flex items-center font-medium">
                  <Flag /><Coins kind={row.coin} className="ml-px size-[13px]" /><span className="ml-[3px]">{row.symbol}</span>
                </span>
              </td>
              <td className={`pr-[10px] text-right ${row.color}`}>{row.change}</td>
            </tr>
          ))}
        </tbody>
      </table>
      <div className="mt-auto flex h-[34px] items-center border-t-2 border-[#2b2b2b] px-[10px]">
        <Coins className="size-4" />
        <span className="ml-[6px] text-[9px] font-bold">E..</span>
        <button aria-label="Vista" className="ml-auto"><BlocksIcon /></button>
        <button aria-label="Nota" className="ml-[10px]"><SquarePen className="size-[14px]" strokeWidth={1.4} /></button>
        <button aria-label="Más" className="ml-[11px]"><DotsIcon /></button>
      </div>
    </section>
  );
}

function WidgetRail() {
  return (
    <aside className="flex w-[31px] shrink-0 flex-col items-center border-l border-[#2b2b2b] bg-[#0f0f0f] pb-[6px] pt-1 text-gray-300">
      <button aria-label="Lista" className="flex size-[25px] items-center justify-center rounded bg-[#333]"><ListIcon /></button>
      <button aria-label="Alertas" className="relative mt-[7px]">
        <AlarmIcon />
        <span className="absolute -right-[3px] -top-px rounded-full bg-[#e0284c] px-[2px] text-[8px] font-medium leading-[11px] text-white">33</span>
      </button>
      <button aria-label="Capas" className="mt-3"><Layers className="size-[18px]" strokeWidth={1.3} /></button>
      <button aria-label="Chats" className="mt-[14px]"><MessagesSquare className="size-[18px]" strokeWidth={1.3} /></button>
      <div className="mt-auto flex flex-col items-center gap-[11px]">
        <button aria-label="Radar"><TargetIcon /></button>
        <button aria-label="Opciones"><PyramidIcon /></button>
        <button aria-label="Calendario"><Calendar className="size-[18px]" strokeWidth={1.3} /></button>
        <button aria-label="Noticias" className="relative pt-[3px]">
          <FeedIcon />
          <span className="absolute -right-1 -top-[3px] rounded-full bg-[#e0284c] px-[2px] text-[8px] font-medium leading-[11px] text-white">99+</span>
        </button>
        <button aria-label="Notificaciones"><Bell className="size-[18px]" strokeWidth={1.3} /></button>
        <button aria-label="Aplicaciones" className="flex size-[23px] items-center justify-center rounded-full bg-white">
          <svg viewBox="0 0 12 12" className="size-3 fill-[#111]" aria-hidden="true">
            <path d="M0 0h3v3H0zM4.5 0h3v3h-3zM9 0h3v3H9zM0 4.5h3v3H0zM4.5 4.5h3v3h-3zM9 4.5h3v3H9zM0 9h3v3H0zM4.5 9h3v3h-3zM9 9h3v3H9z" />
          </svg>
        </button>
      </div>
      <span className="mb-[9px] mt-[7px] h-px w-[22px] bg-[#3d3d3d]" />
      <button aria-label="Ayuda"><CircleHelp className="size-5" strokeWidth={1.2} /></button>
    </aside>
  );
}

function TaskItem({ label, running, active, children }) {
  return (
    <button aria-label={label} className={`relative flex h-[27px] w-[29px] items-center justify-center rounded ${active ? 'bg-[#2c2c2c]' : ''}`}>
      {children}
      {running && <span className={`absolute bottom-0 h-[2px] rounded-full ${active ? 'w-[10px] bg-[#e58a90]' : 'w-1 bg-[#9a9a9a]'}`} />}
    </button>
  );
}

function Taskbar() {
  return (
    <footer className="grid h-8 shrink-0 grid-cols-[1fr_auto_1fr] items-center border-t border-[#3c3c3c] bg-[#1b1b1b] pb-px font-['Open_Sans','Noto_Sans',sans-serif] text-[8px] text-gray-200">
      <button className="flex items-center gap-[3px] pl-3 text-left">
        <svg viewBox="0 0 20 20" className="size-[19px]" aria-hidden="true">
          <path d="m7 2 1.5 3L12 4l-1 4H3l1-1-2-3 3 1z" fill="#e9a13b" />
          <path d="M4 19a4 4 0 0 1 0-8 5.5 5.5 0 0 1 10 0 4 4 0 0 1 1 8z" fill="#b9d2f3" />
          <circle cx="14" cy="5.5" r="5.5" fill="#f0707c" />
          <text x="14" y="8.5" textAnchor="middle" fontSize="8" fill="#2a1010">2</text>
        </svg>
        <span className="leading-[11px]">23°C<br /><span className="text-gray-300">Mayorm. nublado</span></span>
      </button>
      <div className="flex items-center pl-[6px]">
        <button aria-label="Inicio" className="mr-[9px] grid size-4 grid-cols-2 gap-px">
          <span className="bg-[#5cd3f8]" /><span className="bg-[#4cc6f5]" /><span className="bg-[#38b4ee]" /><span className="bg-[#2aa3e8]" />
        </button>
        <label className="mr-1 flex h-[22px] w-[145px] items-center gap-[6px] rounded-full bg-[#383838] pl-2 pr-1">
          <Search className="size-[11px] shrink-0" />
          <input placeholder="Buscar" aria-label="Buscar" className="min-w-0 flex-1 bg-transparent text-[9px] outline-none placeholder:text-gray-300" />
          <svg viewBox="0 0 30 18" className="h-[17px] w-[29px] shrink-0" aria-hidden="true">
            <path d="M0 18C0 8 6 1 15 1s15 7 15 17z" fill="#3e6a8c" />
            <path d="M3 10c6-7 12 2 22-5l3 7-12 4z" fill="#54c7a4" opacity=".7" />
            <path d="m8 13 6-8 5 5 3-2 6 10H3z" fill="#d7bf92" /><path d="M1 18c6-6 10 0 14-3 5-3 9-1 14 3z" fill="#1c2870" />
            <circle cx="8" cy="6" r="1.5" fill="#c28be0" />
          </svg>
        </label>
        <TaskItem label="Vista de tareas">
          <svg viewBox="0 0 18 18" className="size-4"><path d="M1 7h11v8H1z" fill="#747474" /><path d="M5 2h12v10H5z" fill="#e2e2e2" /></svg>
        </TaskItem>
        <TaskItem label="Copilot">
          <svg viewBox="0 0 18 18" className="size-4">
            <path d="M6 2h5c2 0 2 2 1 4l-3 7c-1 2-2 2-4 2-4 0-5-2-4-5l2-5c1-2 1-3 3-3z" fill="#2a8fe0" />
            <path d="M7 2h4c1 0 2 1 2 3L9 7l-3 5H2l2-7c1-2 1-3 3-3z" fill="#38c08c" opacity=".6" />
            <path d="M12 4c4 0 6 2 5 5l-2 5c-1 2-2 3-4 3H7c-2 0-1-2 0-4l3-7c0-1 1-2 2-2z" fill="#c65bd0" />
            <path d="m11 6 5-1c1 2 1 3 0 6l-6 2z" fill="#f39a4a" opacity=".9" /><path d="m8 8 2-2 1 1-2 5H7z" fill="#1b1b1b" />
          </svg>
        </TaskItem>
        <TaskItem label="Explorador">
          <svg viewBox="0 0 18 16" className="h-[15px] w-[17px]">
            <path d="M0 1h6l2 2h10v12H0z" fill="#e0a52c" /><path d="M0 5h18v10H0z" fill="#fbd25a" /><path d="M3 15v-4q0-2 2-2h8q2 0 2 2v4z" fill="#2f86cc" />
          </svg>
        </TaskItem>
        <TaskItem label="Store">
          <svg viewBox="0 0 18 18" className="size-4">
            <path d="M6 4V1h6v3" fill="none" stroke="#49a8e0" strokeWidth="1.5" /><rect x="1" y="3.5" width="16" height="14" rx="2" fill="#f0f0f0" />
            <path d="M5.5 7h3v3h-3z" fill="#e8502c" /><path d="M9.5 7h3v3h-3z" fill="#6cae20" /><path d="M5.5 11h3v3h-3z" fill="#2596e0" /><path d="M9.5 11h3v3h-3z" fill="#f0b420" />
          </svg>
        </TaskItem>
        <TaskItem label="Brave" running>
          <svg viewBox="0 0 18 18" className="absolute size-[17px]"><path d="M5 1h8l1.5 2L16 3l.5 5c0 5-4 7-7.5 10C5.5 15 1.5 13 1.5 8L2 3h1.5z" fill="#e8402e" /></svg>
          <SiBrave className="relative size-[13px] text-white" />
        </TaskItem>
        <TaskItem label="TradingView" running active>
          <span className="flex size-[15px] items-center justify-center rounded-[2px] bg-black"><TvLogo className="h-[9px] w-[14px]" fill="#fff" /></span>
        </TaskItem>
        <TaskItem label="Finanzas">
          <svg viewBox="0 0 18 18" className="size-[17px]">
            <path d="M6 2 9 1l3 1-1 3 3 6-5 4-6-3 4-7z" fill="#8bb04a" /><path d="M1 12h5v5H2z" fill="#2a8fe0" /><path d="m12 10 5 6H9z" fill="#2a8fe0" />
            <circle cx="9" cy="11.5" r="5" fill="#e8d68c" /><path d="M11 9.5c-3-2-5 1-2 2s1 4-2 2M9 8v7" fill="none" stroke="#577832" strokeWidth="1.2" />
          </svg>
        </TaskItem>
        <TaskItem label="WhatsApp" running>
          <SiWhatsapp className="size-[17px] text-[#3ad366]" />
          <span className="absolute right-[3px] top-[2px] flex size-[10px] items-center justify-center rounded-full bg-[#ee7a72] text-[7px] text-[#301010]">3</span>
        </TaskItem>
        <TaskItem label="Notion"><SiNotion className="size-[14px] text-gray-200" /></TaskItem>
        <TaskItem label="Telegram">
          <span className="flex size-4 items-center justify-center rounded-full bg-[#38a6dd]"><FaTelegramPlane className="size-[10px] text-white" /></span>
        </TaskItem>
        <TaskItem label="Chrome">
          <svg viewBox="0 0 18 18" className="size-4">
            <circle cx="9" cy="9" r="9" fill="#34a853" /><path d="M9 9 1.2 4.5A9 9 0 0 1 16.8 4.5z" fill="#ea4335" />
            <path d="m9 9 7.8-4.5A9 9 0 0 1 9 18l4-7z" fill="#fbbc05" /><path d="M9 4.5h7.8L17 5H9z" fill="#ea4335" />
            <circle cx="9" cy="9" r="4.3" fill="#fff" /><circle cx="9" cy="9" r="3.3" fill="#4285f4" />
          </svg>
        </TaskItem>
        <TaskItem label="OBS" running>
          <SiObsstudio className="size-[15px] text-gray-300" /><span className="absolute right-1 top-1 size-[7px] rounded-full bg-[#f01010]" />
        </TaskItem>
        <TaskItem label="Spotify" running><SiSpotify className="size-4 text-[#1ed760]" /></TaskItem>
      </div>
      <div className="flex items-center justify-end pr-3">
        <ChevronUp className="mr-3 size-[9px]" />
        <Cloud className="mr-[11px] size-[11px] fill-gray-200" />
        <Mic className="mr-3 size-[11px] text-[#c98a78]" />
        <span className="mr-[13px] text-center leading-[11px]">ESP<br />LAA</span>
        <Wifi className="mr-[6px] size-[9px]" />
        <Volume2 className="mr-[6px] size-[10px]" />
        <svg viewBox="0 0 14 8" className="mr-[10px] h-2 w-[14px]" aria-hidden="true">
          <rect x="0" y="1" width="12" height="7" rx="1.5" fill="#a5dca0" /><path d="M12.5 3H14v3h-1.5z" fill="#ddd" /><path d="M4 0v5l3-2v4" fill="none" stroke="#1b1b1b" />
        </svg>
        <span className="text-right leading-[11px]">22:05<br />19/01/2026</span>
      </div>
    </footer>
  );
}

export default function App() {
  const [tab, setTab] = useState(3);
  const [interval, setInterval] = useState('15m');

  return (
    <div className="flex h-screen flex-col overflow-hidden bg-[#0f0f0f] font-['Roboto','Liberation_Sans',sans-serif]">
      <WindowTabs active={tab} onSelect={setTab} />
      <TopBar interval={interval} onInterval={setInterval} />
      <div className="flex min-h-0 flex-1">
        <DrawingRail />
        <main className="flex min-w-0 flex-1 flex-col border-l-2 border-[#2b2b2b]">
          <Chart />
          <TimeAxis />
          <BottomBars />
        </main>
        <div className="w-[3px] shrink-0 bg-[#2b2b2b]" />
        <Watchlist />
        <WidgetRail />
      </div>
      <Taskbar />
    </div>
  );
}
